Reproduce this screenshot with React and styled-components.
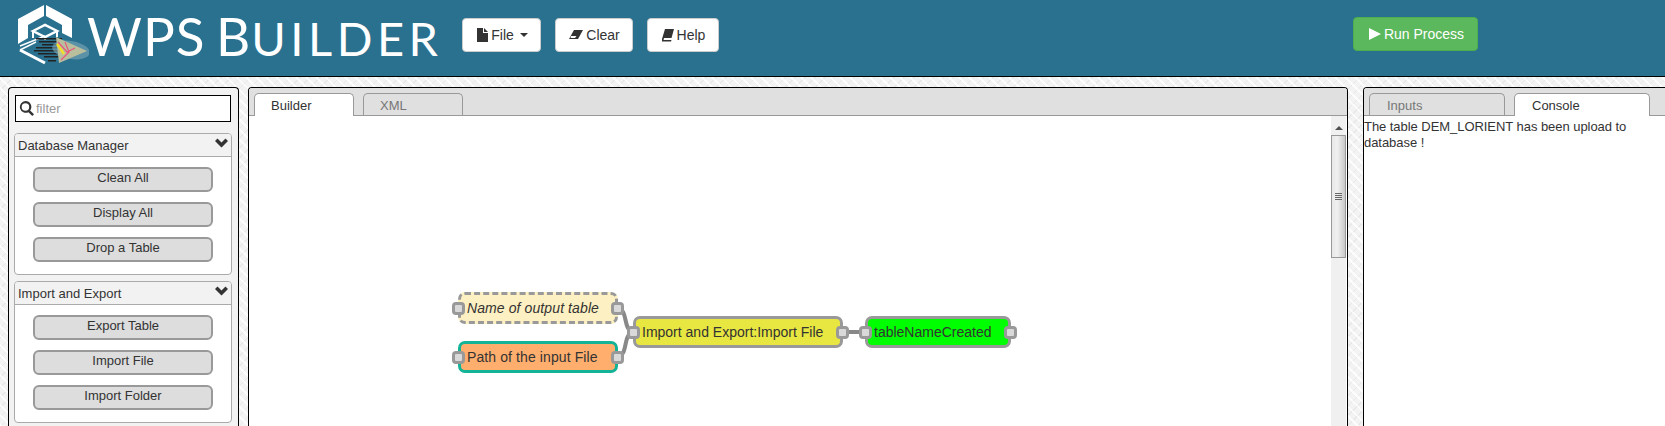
import React from 'react'
import styled, { createGlobalStyle } from 'styled-components'

const GlobalStyle = createGlobalStyle`
    html, body {
        margin: 0;
        height: 100%;
        overflow: hidden;
    }
    body {
        font-family: "Liberation Sans", Arial, sans-serif;
        font-size: 13px;
        color: #333;
        background-color: #f3f3f3;
        background-image:
            repeating-linear-gradient(45deg, rgba(255,255,255,.8) 0 2px, transparent 2px 7px),
            repeating-linear-gradient(-45deg, rgba(225,225,225,.6) 0 1px, transparent 1px 7px);
    }
`

const Page = styled.div`
    display: flex;
    flex-direction: column;
    height: 426px;
    overflow: hidden;
`

const Header = styled.header`
    flex: none;
    display: flex;
    align-items: flex-start;
    height: 76px;
    background: #2a718f;
    border-bottom: 1px solid #000;
`

const Brand = styled.div`
    display: flex;
    align-items: flex-start;
    width: 462px;
    flex: none;
    padding-left: 17px;
    box-sizing: border-box;
`

const Title = styled.h1`
    margin: 2px 0 0 -2px;
    font-family: Lato, sans-serif;
    font-weight: 400;
    font-size: 53px;
    line-height: 68px;
    letter-spacing: 1px;
    word-spacing: -4px;
    color: #fff;
    white-space: nowrap;
    small {
        font-size: 47px;
        letter-spacing: 4.5px;
    }
`

const Toolbar = styled.div`
    display: flex;
    gap: 14px;
    padding-top: 18px;
    width: 891px;
    flex: none;
`

const Button = styled.button`
    display: flex;
    align-items: center;
    justify-content: center;
    gap: 2px;
    width: ${p => p.$w}px;
    height: 34px;
    padding: 0;
    font: 14px "Liberation Sans", Arial, sans-serif;
    color: #333;
    background: #fff;
    border: 1px solid #ccc;
    border-radius: 4px;
`

const RunButton = styled(Button)`
    margin-top: 17px;
    padding-left: 1px;
    color: #fff;
    background: #5cb85c;
    border-color: #4cae4c;
`

const Caret = styled.span`
    margin-left: 4px;
    border-top: 4px solid #333;
    border-left: 4px solid transparent;
    border-right: 4px solid transparent;
`

const Workspace = styled.main`
    flex: 1;
    min-height: 0;
    display: flex;
    padding: 10px 0 0 8px;
`

const Panel = styled.section`
    box-sizing: border-box;
    flex: none;
    width: ${p => p.$w}px;
    margin-right: ${p => p.$gap || 0}px;
    height: 360px;
    border: 1px solid #000;
    border-bottom: 0;
    border-radius: 4px 4px 0 0;
    display: flex;
    flex-direction: column;
    overflow: hidden;
`

const Sidebar = styled(Panel)`
    background: #f2f2f2;
    padding: 7px 5px 0;
`

const Filter = styled.label`
    box-sizing: border-box;
    display: flex;
    align-items: center;
    gap: 2px;
    width: 216px;
    height: 27px;
    margin-left: 1px;
    padding-left: 3px;
    background: #fff;
    border: 1px solid #000;
    input {
        flex: 1;
        min-width: 0;
        padding: 0;
        border: 0;
        outline: 0;
        font: 13px "Liberation Sans", Arial, sans-serif;
    }
    input::placeholder {
        color: #999;
        opacity: 1;
    }
`

const Accordion = styled.div`
    box-sizing: border-box;
    flex: none;
    width: 218px;
    margin-top: ${p => p.$top}px;
    height: 142px;
    background: #fff;
    border: 1px solid #aaa;
    border-radius: 4px;
    overflow: hidden;
`

const AccordionHead = styled.div`
    display: flex;
    align-items: center;
    justify-content: space-between;
    height: 22px;
    padding: 0 3px;
    background: #f2f2f2;
    border-bottom: 1px solid #aaa;
    svg {
        margin-top: -3px;
    }
`

const AccordionBody = styled.div`
    display: flex;
    flex-direction: column;
    align-items: center;
    gap: 10px;
    padding-top: 10px;
`

const ToolButton = styled.div`
    box-sizing: border-box;
    width: 180px;
    height: 25px;
    line-height: 18px;
    text-align: center;
    background: #ddd;
    border: 2px solid #999;
    border-radius: 6px;
`

const Tabs = styled.div`
    flex: none;
    display: flex;
    gap: ${p => p.$gap}px;
    height: 28px;
    box-sizing: border-box;
    padding: 5px 0 0 5px;
    background: #e0e0e0;
    border-bottom: 1px solid #999;
`

const Tab = styled.div`
    box-sizing: border-box;
    width: ${p => p.$w}px;
    height: ${p => (p.$active ? 23 : 22)}px;
    padding-left: ${p => p.$pad}px;
    line-height: 23px;
    color: ${p => (p.$active ? '#333' : '#777')};
    background: ${p => (p.$active ? '#fff' : '#e0e0e0')};
    border: 1px solid #999;
    border-bottom: 0;
    border-radius: 5px 5px 0 0;
    z-index: 1;
`

const BuilderBody = styled.div`
    flex: 1;
    display: flex;
    min-height: 0;
    background: #fff;
`

const Canvas = styled.div`
    position: relative;
    flex: 1;
`

const Wires = styled.svg`
    position: absolute;
    left: 0;
    top: 0;
    width: 100%;
    height: 100%;
`

const Node = styled.div`
    position: absolute;
    box-sizing: border-box;
    left: ${p => p.$x}px;
    top: ${p => p.$y}px;
    width: ${p => p.$w}px;
    height: 32px;
    display: flex;
    align-items: center;
    padding-left: 6px;
    font-size: 14px;
    letter-spacing: ${p => p.$track || 0}px;
    font-style: ${p => (p.$italic ? 'italic' : 'normal')};
    white-space: nowrap;
    background: ${p => p.$bg};
    border: 3px ${p => (p.$dashed ? 'dashed' : 'solid')} ${p => p.$line || '#999'};
    border-radius: 7px;
`

const Port = styled.span`
    position: absolute;
    box-sizing: border-box;
    top: 50%;
    ${p => p.$side}: -9px;
    width: 13px;
    height: 13px;
    margin-top: -6.5px;
    background: #d9d9d9;
    border: 3px solid #999;
    border-radius: 4px;
`

const Scrollbar = styled.div`
    flex: none;
    width: 15px;
    margin-right: 1px;
    display: flex;
    flex-direction: column;
    align-items: center;
    background: #f0f0f0;
`

const ScrollArrow = styled.span`
    margin: 10px 0 5px;
    border-bottom: 4px solid #505050;
    border-left: 4px solid transparent;
    border-right: 4px solid transparent;
`

const ScrollThumb = styled.div`
    box-sizing: border-box;
    width: 15px;
    height: 123px;
    display: flex;
    flex-direction: column;
    justify-content: center;
    align-items: center;
    gap: 1px;
    background: linear-gradient(90deg, #e8e8e8, #f0f0f0 40%, #c8c8c8);
    border: 1px solid #999;
    span {
        width: 7px;
        height: 1px;
        background: #666;
    }
`

const ConsoleText = styled.div`
    flex: 1;
    padding: 3px 25px 0 0;
    line-height: 16px;
    letter-spacing: -0.05px;
    background: #fff;
`

const Icon = ({ size = 14, vb = 14, fill = '#333', children }) => (
    <svg width={size} height={size} viewBox={`0 0 ${vb} ${vb}`} fill={fill}>{children}</svg>
)

const Logo = () => (
    <svg width="72" height="70" viewBox="0 0 72 70" style={{ flex: 'none' }}>
        <g fill="#fff">
            <polygon points="27,5 1,19 1,44 11,38 11,25 27,16" />
            <polygon points="29,5 55,19 55,38 45,33 45,25 29,16" />
        </g>
        <g fill="none" stroke="#fff">
            <polygon points="16,31 28,25 40,31 28,37" strokeWidth="2.5" />
            <path d="M16,31 V38 M40,31 V37 M28,37 V40" strokeWidth="2" />
            <path d="M3,46 L28,36" strokeWidth="1.5" />
            <path d="M3,50 L28,63" strokeWidth="3" />
            <path d="M3,50 L19,42" strokeWidth="1.5" />
        </g>
        <g fill="#222">
            <rect x="19" y="38" width="26" height="1.5" />
            <rect x="22" y="41" width="24" height="1.5" />
            <rect x="25" y="44" width="22" height="1.5" />
            <rect x="19" y="47" width="28" height="1.5" />
            <rect x="17" y="50" width="30" height="1.5" />
            <rect x="21" y="53" width="26" height="1.5" />
            <rect x="27" y="56" width="20" height="1.5" />
            <rect x="31" y="60" width="8" height="1.5" />
        </g>
        <ellipse cx="54" cy="50" rx="19" ry="9" fill="#7fa9b8" opacity=".6" transform="rotate(10 54 50)" />
        <polygon points="39,37 70,51 42,63" fill="#b9bf9c" />
        <path d="M41,42 L50,52 L58,48 M44,60 L52,52 L48,42" stroke="#e8567f" strokeWidth="1.2" fill="none" />
        <path d="M40,44 L47,54" stroke="#f4de2c" strokeWidth="2.5" fill="none" />
    </svg>
)

const DB_TOOLS = ['Clean All', 'Display All', 'Drop a Table']
const IO_TOOLS = ['Export Table', 'Import File', 'Import Folder']

const Chevron = () => (
    <Icon size={13} vb={13}>
        <path d="M0 4 L2.5 1.5 L6.5 5.5 L10.5 1.5 L13 4 L6.5 10.5 Z" />
    </Icon>
)

export default function App() {
    return (
        <Page>
            <GlobalStyle />
            <Header>
                <Brand>
                    <Logo />
                    <Title>WPS B<small>UILDER</small></Title>
                </Brand>
                <Toolbar>
                    <Button $w={79}>
                        <Icon>
                            <path d="M2 0 H8 V5 H13 V14 H2 Z M9 0 L13 4 H9 Z" />
                        </Icon>
                        File<Caret />
                    </Button>
                    <Button $w={78}>
                        <Icon size={16} vb={16}>
                            <path d="M6 3 H15 L10 12 H1 Z" />
                            <path d="M3 9 H8.5 L7 11 H2.5 Z" fill="#fff" />
                        </Icon>
                        Clear
                    </Button>
                    <Button $w={72}>
                        <Icon>
                            <path d="M4 1 H13 L10.5 10 H3 L2.5 12 H10.5 L10 13.5 H1 L1 11 Z" />
                        </Icon>
                        Help
                    </Button>
                </Toolbar>
                <RunButton $w={125}>
                    <Icon fill="#fff">
                        <path d="M1 1 L13 7 L1 13 Z" />
                    </Icon>
                    Run Process
                </RunButton>
            </Header>
            <Workspace>
                <Sidebar $w={231} $gap={9}>
                    <Filter>
                        <Icon size={15} vb={14}>
                            <path fillRule="evenodd" d="M6 0 a5.5 5.5 0 0 1 4.4 8.8 L14 12.4 L12.4 14 L8.8 10.4 A5.5 5.5 0 1 1 6 0 Z M6 2 a3.5 3.5 0 1 0 0 7 a3.5 3.5 0 0 0 0 -7 Z" />
                        </Icon>
                        <input placeholder="filter" />
                    </Filter>
                    <Accordion $top={11}>
                        <AccordionHead>Database Manager<Chevron /></AccordionHead>
                        <AccordionBody>
                            {DB_TOOLS.map(t => <ToolButton key={t}>{t}</ToolButton>)}
                        </AccordionBody>
                    </Accordion>
                    <Accordion $top={6}>
                        <AccordionHead>Import and Export<Chevron /></AccordionHead>
                        <AccordionBody>
                            {IO_TOOLS.map(t => <ToolButton key={t}>{t}</ToolButton>)}
                        </AccordionBody>
                    </Accordion>
                </Sidebar>
                <Panel $w={1100} $gap={15}>
                    <Tabs $gap={9}>
                        <Tab $w={100} $pad={16} $active>Builder</Tab>
                        <Tab $w={100} $pad={16}>XML</Tab>
                    </Tabs>
                    <BuilderBody>
                        <Canvas>
                            <Wires>
                                <path d="M367 192 C 381 192, 372 216, 386 216 M367 241 C 381 241, 372 216, 386 216" stroke="#888" strokeWidth="4" fill="none" />
                                <path d="M594 216 H 617" stroke="#888" strokeWidth="4" fill="none" />
                            </Wires>
                            <Node $x={209} $y={176} $w={160} $bg="#fdf0c2" $track={0.1} $italic $dashed>
                                <Port $side="left" />Name of output table<Port $side="right" />
                            </Node>
                            <Node $x={209} $y={225} $w={160} $bg="#ffae6e" $track={0.1} $line="#12b397">
                                <Port $side="left" />Path of the input File<Port $side="right" />
                            </Node>
                            <Node $x={384} $y={200} $w={210} $bg="#e8e640">
                                <Port $side="left" />Import and Export:Import File<Port $side="right" />
                            </Node>
                            <Node $x={616} $y={200} $w={146} $bg="#00ff00">
                                <Port $side="left" />tableNameCreated<Port $side="right" />
                            </Node>
                        </Canvas>
                        <Scrollbar>
                            <ScrollArrow />
                            <ScrollThumb><span /><span /><span /><span /></ScrollThumb>
                        </Scrollbar>
                    </BuilderBody>
                </Panel>
                <Panel $w={310}>
                    <Tabs $gap={9}>
                        <Tab $w={136} $pad={17}>Inputs</Tab>
                        <Tab $w={136} $pad={17} $active>Console</Tab>
                    </Tabs>
                    <ConsoleText>The table DEM_LORIENT has been upload to database !</ConsoleText>
                </Panel>
            </Workspace>
        </Page>
    )
}
